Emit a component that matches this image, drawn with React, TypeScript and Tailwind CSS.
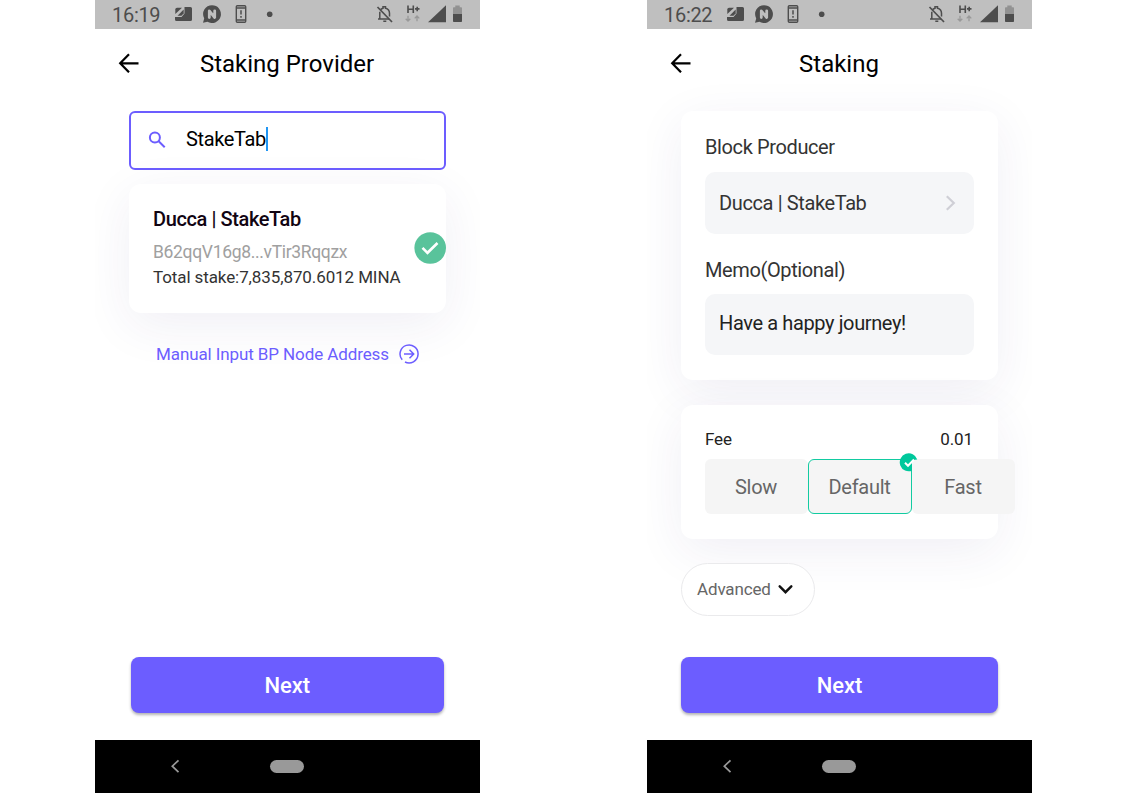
import type { ReactNode } from "react";

function StatusBar({ time }: { time: string }) {
  return (
    <div className="flex h-[29px] shrink-0 items-center bg-[#bfbfbf] text-[#4d4d4d]">
      <span className="ml-[17px] w-14 pt-px text-[20px] leading-[29px] tracking-[-0.3px] whitespace-nowrap">{time}</span>
      <svg width="120" height="29" viewBox="0 0 120 29" fill="none">
        <path fill="#4d4d4d" d="M16.500 7h6q1.500 0 1.500 1.500v11q0 1.500-1.500 1.500h-14q-1.500 0-1.500-1.500V17h6.500l3-3.500z" />
        <path d="M7.300 14V9.500q0-1.700 1.700-1.700h5z" fill="#4d4d4d" />
        <path d="M9.500 15.700L15.700 9.500v3.700l-2.200 2.500z" fill="#4d4d4d" />
        <path d="M44 5.200a8.900 8.900 0 1 1-4.600 16.500l-4.400 1 1.200-4.300A8.900 8.900 0 0 1 44 5.200z" fill="#4d4d4d" />
        <path d="M41.300 17.500v-6.700l5.400 6.700v-6.700" stroke="#bfbfbf" strokeWidth="2.800" strokeLinejoin="round" strokeLinecap="round" />
        <rect x="68.300" y="5.700" width="9.400" height="16.600" rx="1" stroke="#4d4d4d" strokeWidth="1.400" />
        <path d="M68 8h10M68 20h10" stroke="#4d4d4d" strokeWidth="1.300" />
        <path d="M73 10.300v4.300M73 16v1.700" stroke="#4d4d4d" strokeWidth="1.500" />
        <circle cx="101.700" cy="14.200" r="2.800" fill="#4d4d4d" />
      </svg>
      <svg className="ml-auto" width="110" height="29" viewBox="0 0 110 29" fill="none">
        <path d="M10.500 9.700Q12 8.500 13 8.300V6.700h2.500v1.600q4 1 4 5v3.200M9.800 11.700v6.800M8 19h11M13.300 21.300h3" stroke="#4d4d4d" strokeWidth="1.500" />
        <path d="M7.500 7l14.500 15" stroke="#4d4d4d" strokeWidth="1.700" />
        <path d="M38 5.500v7.500M43.300 5.500v7.500M38 9.200h5.300M45 8.900h4.500M47.200 6.700v4.500" stroke="#4d4d4d" strokeWidth="1.600" />
        <path d="M38 15.700v5.200M35.700 18.700l2.300 2.400 2.300-2.400M47 21.300v-5.200M44.700 18.400l2.300-2.400 2.300 2.400" stroke="#999" strokeWidth="1.300" />
        <path d="M76 5.300v16.900H58z" fill="#4d4d4d" />
        <path d="M83 14V8q0-.800.800-.800h1.500V5.500h4.400v1.700h1.500q.800 0 .8.800v6z" fill="#929292" />
        <path d="M83 14h9v7.200q0 .8-.8.800h-7.400q-.8 0-.8-.8z" fill="#4d4d4d" />
      </svg>
    </div>
  );
}

function Header({ title }: { title: string }) {
  return (
    <div className="relative flex h-[70px] shrink-0 items-center justify-center">
      <svg className="absolute top-[24px] left-[23px]" width="22" height="20" viewBox="0 0 22 20" fill="none" stroke="#000" strokeWidth="2.200">
        <path d="M20.500 10.300H2.500M11 1.300L2.200 10.300 11 19.300" />
      </svg>
      <h1 className="pr-px text-[24px] leading-[30px] text-black">{title}</h1>
    </div>
  );
}

function NavBar() {
  return (
    <div className="flex h-[53px] shrink-0 items-center bg-black pb-px">
      <svg className="ml-[75px]" width="11" height="14" viewBox="0 0 11 14" fill="none" stroke="#999" strokeWidth="1.700">
        <path d="M8.500 1.300L2.300 7.200l6.200 5.900" />
      </svg>
      <div className="ml-[89px] h-[13px] w-[34px] rounded-full bg-[#999]" />
    </div>
  );
}

function Phone({ time, title, children }: { time: string; title: string; children: ReactNode }) {
  return (
    <section className="flex h-[793px] w-[385px] shrink-0 flex-col overflow-hidden bg-white">
      <StatusBar time={time} />
      <Header title={title} />
      <main className="flex flex-1 flex-col">{children}</main>
      <NavBar />
    </section>
  );
}

function NextButton({ className }: { className: string }) {
  return (
    <button className={`mt-auto mb-[27px] h-[56px] shrink-0 rounded-lg bg-[#6c5dff] pt-px text-[22px] font-medium tracking-[-0.1px] text-white shadow-[0_2px_3px_rgba(0,0,0,0.3)] ${className}`}>
      Next
    </button>
  );
}

const card = "rounded-xl bg-white shadow-[0_12px_50px_rgba(47,41,120,0.075)]";

export default function App() {
  return (
    <div className="flex h-[794px] w-[1123px] gap-[167px] overflow-hidden bg-white pl-[95px] font-[Roboto,sans-serif]">
      <Phone time="16:19" title="Staking Provider">
        <div className="mt-[12px] ml-[34px] flex h-[59px] w-[317px] items-center rounded-md border-2 border-[#6c5dff] pb-[3px]">
          <svg className="ml-[17px]" width="18" height="18" viewBox="0 0 18 18" fill="none" stroke="#6c5dff" strokeWidth="2">
            <circle cx="6.900" cy="7.500" r="5" />
            <path d="M10.700 11.300l6 6" />
          </svg>
          <span className="ml-5 text-[20px] leading-6 tracking-[-0.38px] text-black">StakeTab</span>
          <span className="h-6 w-[2.500px] bg-[#2196f3]" />
        </div>
        <div className={`relative mt-[14px] ml-[34px] h-[129px] w-[317px] pt-[22px] pl-6 ${card}`}>
          <div className="text-[20px] leading-[26px] font-medium tracking-[-0.4px] text-[#110412]">Ducca | StakeTab</div>
          <div className="mt-2 text-[17.5px] leading-6 tracking-[-0.33px] text-[#a0a0a0]">B62qqV16g8...vTir3Rqqzx</div>
          <div className="mt-px text-[17px] leading-6 tracking-[-0.1px] whitespace-nowrap text-[#333]">Total stake:7,835,870.6012 MINA</div>
          <svg className="absolute top-[48px] right-0" width="32" height="32" viewBox="0 0 32 32" fill="none">
            <circle cx="16.200" cy="16" r="15.800" fill="#59c39b" />
            <path d="M8.500 15.800l5 5L23.500 11" stroke="#fff" strokeWidth="2.600" />
          </svg>
        </div>
        <div className="relative mt-[29px] ml-[61px] flex items-center text-[17px] leading-6 tracking-[-0.1px] text-[#6c5dff]">
          <span>Manual Input BP Node Address</span>
          <svg className="ml-[10px]" width="20" height="20" viewBox="0 0 20 20" fill="none" stroke="#6c5dff" strokeWidth="1.500">
            <path d="M3.200 15.800A9 9 0 1 1 6 18" />
            <path d="M5 10h9.500M10.500 5.800l4.200 4.200-4.200 4.200" />
          </svg>
        </div>
        <NextButton className="mr-[36.5px] ml-[36px]" />
      </Phone>

      <Phone time="16:22" title="Staking">
        <div className={`mt-[12px] ml-[34px] h-[269px] w-[317px] px-6 pt-[24px] text-[20px] tracking-[-0.38px] text-[#333] ${card}`}>
          <div className="leading-6">Block Producer</div>
          <div className="mt-[13px] flex h-[62px] w-[269px] items-center justify-between rounded-[10px] bg-[#f5f6f8] pr-[18px] pl-[14px]">
            <span>Ducca | StakeTab</span>
            <svg width="11" height="16" viewBox="0 0 11 16" fill="none" stroke="#cfcfd6" strokeWidth="2.200">
              <path d="M1.800 1.200L8.800 8l-7 6.800" />
            </svg>
          </div>
          <div className="mt-[24px] leading-6">Memo(Optional)</div>
          <div className="mt-[12px] flex h-[61px] w-[269px] items-center rounded-[10px] bg-[#f5f6f8] px-[14px] pb-[3px] text-[#222]">
            Have a happy journey!
          </div>
        </div>

        <div className={`relative mt-[25px] ml-[34px] h-[134px] w-[317px] pt-[23px] pl-6 ${card}`}>
          <div className="flex w-[268px] justify-between text-[17px] leading-[22px] tracking-[-0.1px] text-[#222]">
            <span>Fee</span>
            <span>0.01</span>
          </div>
          <div className="mt-[9px] flex h-[55px] w-[310px] text-[20px] tracking-[-0.3px] text-[#666]">
            <div className="flex w-[103px] shrink-0 items-center justify-center rounded-md bg-[#f5f5f5] pr-px">Slow</div>
            <div className="relative flex w-[104px] shrink-0 items-center justify-center rounded-md border border-[#12cba1] bg-[#f5f5f5] pr-px">
              Default
              <svg className="absolute -top-[7px] -right-[7px]" width="19" height="19" viewBox="0 0 19 19" fill="none">
                <path d="M18.300 6.500A9 9 0 1 0 13 17.700V10q0-3.500 5.300-3.500z" fill="#00c89c" />
                <path d="M6 9.700l3 3L15 6.500" stroke="#fff" strokeWidth="2" />
              </svg>
            </div>
            <div className="flex w-[103px] shrink-0 items-center justify-center rounded-md bg-[#f5f5f5] pr-px">Fast</div>
          </div>
        </div>

        <div className="relative mt-[24px] ml-[34px] flex h-[53px] w-[134px] items-center rounded-full border border-[#eaeaec] bg-white pl-[15px] text-[17px] tracking-[-0.15px] text-[#666]">
          <span className="pt-px">Advanced</span>
          <svg className="ml-[7px]" width="15" height="10" viewBox="0 0 15 10" fill="none" stroke="#111" strokeWidth="2.400" strokeLinecap="round">
            <path d="M1.700 1.300l5.800 5.900 5.800-5.900" />
          </svg>
        </div>
        <NextButton className="mx-[34px]" />
      </Phone>
    </div>
  );
}
